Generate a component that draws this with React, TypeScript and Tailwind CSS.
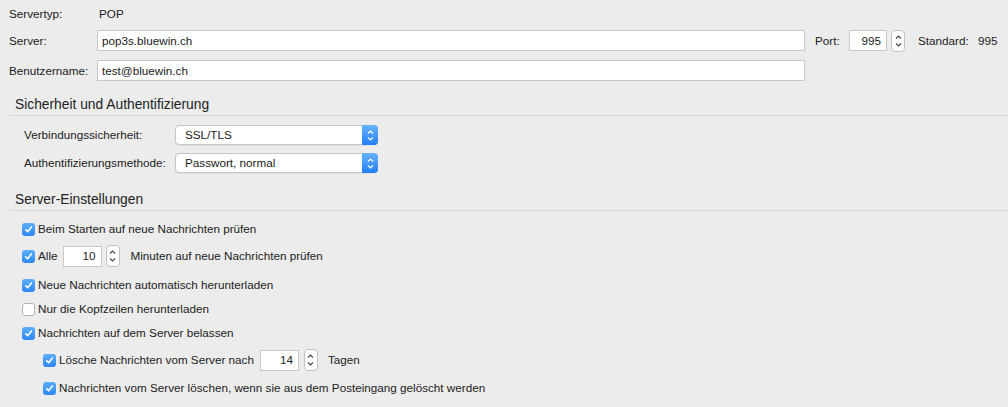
import React from "react";

const font = { fontFamily: '"Liberation Sans", Arial, sans-serif' };

function Check({ checked }: { checked: boolean }) {
  if (!checked) {
    return (
      <span className="inline-block h-[13px] w-[13px] shrink-0 rounded-[3px] border border-[#b4b4b4] bg-white" />
    );
  }
  return (
    <span className="inline-flex h-[13px] w-[13px] shrink-0 items-center justify-center rounded-[3px] bg-gradient-to-b from-[#5aaefc] to-[#2d87f5]">
      <svg width="9" height="9" viewBox="0 0 9 9">
        <path d="M1.6 4.8 L3.6 6.8 L7.4 2" fill="none" stroke="white" strokeWidth="1.6" strokeLinecap="round" strokeLinejoin="round" />
      </svg>
    </span>
  );
}

function Stepper() {
  return (
    <span className="inline-flex h-[22px] w-[14px] shrink-0 flex-col items-center justify-center gap-[4px] rounded-[4px] border border-[#c4c4c4] bg-white">
      <svg width="7" height="4" viewBox="0 0 7 4">
        <path d="M1 3.5 L3.5 1 L6 3.5" fill="none" stroke="#444" strokeWidth="1.1" />
      </svg>
      <svg width="7" height="4" viewBox="0 0 7 4">
        <path d="M1 0.5 L3.5 3 L6 0.5" fill="none" stroke="#444" strokeWidth="1.1" />
      </svg>
    </span>
  );
}

function NumberBox({ value, width }: { value: string; width: string }) {
  return (
    <span className={`flex h-[21px] ${width} shrink-0 items-center justify-end border border-[#c8c8c8] bg-white pr-[5px] text-[#222]`}>
      {value}
    </span>
  );
}

function Select({ value }: { value: string }) {
  return (
    <div className="flex h-[20px] w-[203px] items-center rounded-[4px] border border-[#c6c6c6] bg-white shadow-[0_1px_0_rgba(0,0,0,0.05)]">
      <span className="flex-1 pl-[9px] text-[#222]">{value}</span>
      <span className="-mr-px flex h-[20px] w-[16px] flex-col items-center justify-center gap-[3px] rounded-r-[4px] bg-gradient-to-b from-[#68b3fd] to-[#1f7ef5]">
        <svg width="7" height="4" viewBox="0 0 7 4">
          <path d="M1 3.5 L3.5 1 L6 3.5" fill="none" stroke="white" strokeWidth="1.2" />
        </svg>
        <svg width="7" height="4" viewBox="0 0 7 4">
          <path d="M1 0.5 L3.5 3 L6 0.5" fill="none" stroke="white" strokeWidth="1.2" />
        </svg>
      </span>
    </div>
  );
}

function Heading({ children, mt }: { children: React.ReactNode; mt: string }) {
  return (
    <div className={`${mt} ml-[10px] flex h-[21px] items-center border-b border-[#d9d9d9] pl-[5px] text-[13.8px] text-[#222]`}>
      {children}
    </div>
  );
}

function CheckRow({
  checked,
  indent,
  mt,
  children,
}: {
  checked: boolean;
  indent?: boolean;
  mt: string;
  children: React.ReactNode;
}) {
  return (
    <div className={`${mt} flex h-[20px] items-center gap-[3px] ${indent ? "pl-[43px]" : "pl-[22px]"}`}>
      <Check checked={checked} />
      {children}
    </div>
  );
}

export default function App() {
  return (
    <div className="h-[407px] w-[1008px] overflow-hidden whitespace-nowrap bg-[#ececec] pt-[4px] text-[11.7px] text-[#222]" style={font}>
      {/* Server details */}
      <div className="flex h-[20px] items-center pl-[9px]">
        <span className="w-[90px]">Servertyp:</span>
        <span>POP</span>
      </div>
      <div className="mt-[6px] flex h-[21px] items-center pl-[9px]">
        <span className="w-[88px]">Server:</span>
        <span className="flex h-[21px] w-[708px] items-center border border-[#c8c8c8] bg-white pl-[4px]">pop3s.bluewin.ch</span>
        <span className="ml-[10px] w-[34px]">Port:</span>
        <NumberBox value="995" width="w-[38px]" />
        <span className="ml-[4px] flex"><Stepper /></span>
        <span className="ml-[13px] w-[60px]">Standard:</span>
        <span>995</span>
      </div>
      <div className="mt-[9px] flex h-[21px] items-center pl-[9px]">
        <span className="w-[88px]">Benutzername:</span>
        <span className="flex h-[21px] w-[708px] items-center border border-[#c8c8c8] bg-white pl-[4px]">test@bluewin.ch</span>
      </div>

      <Heading mt="mt-[14px]">Sicherheit und Authentifizierung</Heading>
      <div className="mt-[9px] flex h-[20px] items-center pl-[24px]">
        <span className="w-[151px]">Verbindungssicherheit:</span>
        <Select value="SSL/TLS" />
      </div>
      <div className="mt-[8px] flex h-[20px] items-center pl-[24px]">
        <span className="w-[151px]">Authentifizierungsmethode:</span>
        <Select value="Passwort, normal" />
      </div>

      <Heading mt="mt-[17px]">Server-Einstellungen</Heading>
      <CheckRow checked mt="mt-[8px]">
        <span>Beim Starten auf neue Nachrichten prüfen</span>
      </CheckRow>
      <CheckRow checked mt="mt-[7px]">
        <span>Alle</span>
        <span className="ml-[2px] flex"><NumberBox value="10" width="w-[39px]" /></span>
        <span className="ml-[1px] flex"><Stepper /></span>
        <span className="ml-[8px]">Minuten auf neue Nachrichten prüfen</span>
      </CheckRow>
      <CheckRow checked mt="mt-[9px]">
        <span>Neue Nachrichten automatisch herunterladen</span>
      </CheckRow>
      <CheckRow checked={false} mt="mt-[4px]">
        <span>Nur die Kopfzeilen herunterladen</span>
      </CheckRow>
      <CheckRow checked mt="mt-[4px]">
        <span>Nachrichten auf dem Server belassen</span>
      </CheckRow>
      <CheckRow checked indent mt="mt-[7px]">
        <span>Lösche Nachrichten vom Server nach</span>
        <span className="ml-[3px] flex"><NumberBox value="14" width="w-[39px]" /></span>
        <span className="ml-[2px] flex"><Stepper /></span>
        <span className="ml-[7px]">Tagen</span>
      </CheckRow>
      <CheckRow checked indent mt="mt-[8px]">
        <span>Nachrichten vom Server löschen, wenn sie aus dem Posteingang gelöscht werden</span>
      </CheckRow>
    </div>
  );
}
